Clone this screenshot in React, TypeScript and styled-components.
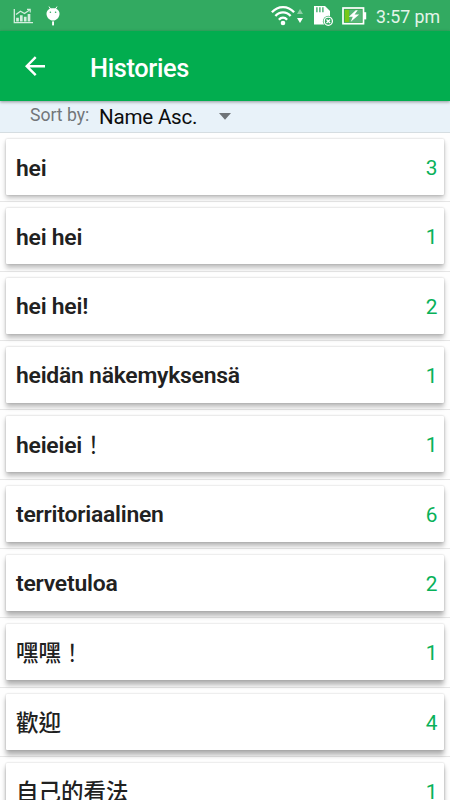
import React from "react";
import styled, { createGlobalStyle } from "styled-components";

const Global = createGlobalStyle`
  * { box-sizing: border-box; }
  html, body { margin: 0; height: 100%; overflow: hidden; background: #fff; }
  body { font-family: Roboto, "Noto Sans CJK TC", sans-serif; }
`;

const Screen = styled.div`
  width: 450px;
  height: 800px;
  overflow: hidden;
  display: flex;
  flex-direction: column;
  background: #fefefe;
`;

const StatusBar = styled.header`
  flex: none;
  height: 31px;
  background: #32aa61;
  display: flex;
  align-items: center;
  justify-content: space-between;
  padding: 0 9px 0 13px;
`;

const StatusGroup = styled.div`
  display: flex;
  align-items: center;
  height: 31px;
  svg { display: block; flex: none; }
`;

const Clock = styled.span`
  margin-left: 9px;
  width: 65px;
  white-space: nowrap;
  font-size: 17.8px;
  letter-spacing: -0.05px;
  line-height: 31px;
  padding-top: 2px;
  color: #e3f4e9;
`;

const AppBar = styled.div`
  flex: none;
  height: 70px;
  background: #02ad4f;
  display: flex;
  align-items: center;
  padding-left: 24px;
  box-shadow: 0 1px 3px rgba(0, 0, 0, 0.38);
  z-index: 1;
`;

const BackButton = styled.button`
  border: 0;
  padding: 0;
  background: none;
  width: 22px;
  height: 22px;
  svg { display: block; }
`;

const Title = styled.h1`
  margin: 4px 0 0 44px;
  font-size: 25.4px;
  letter-spacing: -0.35px;
  line-height: 32px;
  font-weight: 500;
  color: #fff;
`;

const SortBar = styled.div`
  flex: none;
  height: 32px;
  background: #e8f2f9;
  border-bottom: 1px solid #d5dde1;
  display: flex;
  align-items: flex-start;
  padding-left: 30px;
`;

const SortLabel = styled.span`
  width: 69px;
  font-size: 17.6px;
  line-height: 20px;
  padding-top: 4px;
  color: #727679;
`;

const SortSelect = styled.div`
  display: flex;
  align-items: center;
  width: 132px;
  height: 31px;
  justify-content: space-between;
  font-size: 20.6px;
  letter-spacing: -0.22px;
  line-height: 31px;
  padding-top: 2px;
  color: #0c0d0e;
  svg { display: block; margin-top: -3px; }
`;

const List = styled.ul`
  list-style: none;
  margin: 0;
  padding: 0;
`;

const Row = styled.li`
  height: 69.33px;
  padding: 6px 6px 0;
  border-bottom: 1px solid #e6e6e6;
`;

const Card = styled.div<{ $depth: number }>`
  height: 56px;
  background: #fff;
  border-radius: 1px;
  display: flex;
  align-items: center;
  justify-content: space-between;
  padding: 2px 6.5px 0 10px;
  box-shadow: 0 0 2px rgba(0, 0, 0, 0.22),
    0 ${(p) => 3 + p.$depth * 0.2}px 5px rgba(0, 0, 0, ${(p) => 0.24 + p.$depth * 0.008});
`;

const Phrase = styled.span<{ $cjk?: boolean }>`
  font-size: ${(p) => (p.$cjk ? 22.5 : 22.9)}px;
  font-weight: ${(p) => (p.$cjk ? 500 : 600)};
  letter-spacing: ${(p) => (p.$cjk ? 0 : -0.23)}px;
  line-height: 30px;
  padding-top: ${(p) => (p.$cjk ? 0 : 1)}px;
  color: #212121;
  white-space: nowrap;
`;

const WideMark = styled.span`
  font-family: "Noto Sans CJK JP", sans-serif;
  font-weight: 400;
  line-height: 0;
`;

const Count = styled.span`
  font-size: 20.8px;
  line-height: 30px;
  color: #08b159;
`;

type History = { text: string; mark?: string; count: number; cjk?: boolean };

const histories: History[] = [
  { text: "hei", count: 3 },
  { text: "hei hei", count: 1 },
  { text: "hei hei!", count: 2 },
  { text: "heidän näkemyksensä", count: 1 },
  { text: "heieiei", mark: "！", count: 1 },
  { text: "territoriaalinen", count: 6 },
  { text: "tervetuloa", count: 2 },
  { text: "嘿嘿", mark: "！", count: 1, cjk: true },
  { text: "歡迎", count: 4, cjk: true },
  { text: "自己的看法", count: 1, cjk: true },
];

const ChartIcon = () => (
  <svg width="20" height="16" viewBox="0 0 20 16" fill="none" stroke="#d5eedf">
    <path d="M1.3 1v13.7H20" strokeWidth="1.3" />
    <path d="M3 6.5 7.5 3.2l4 2.3L16.6 2" strokeWidth="1.3" />
    <path d="M14 1.4h3.2v3" strokeWidth="1.1" />
    <path d="M4.5 13.5v-3.7M8.3 13.5V7.2M12.2 13.5V8.8M16 13.5V6" strokeWidth="2.7" />
  </svg>
);

const DebugIcon = () => (
  <svg width="14" height="20" viewBox="0 0 14 20">
    <path d="m3 .6 2 3M11 .6l-2 3" stroke="#fff" strokeWidth="1" />
    <path d="M.5 7.8C.5 4.3 3.2 2.3 7 2.3s6.5 2 6.5 5.5S10.6 14.6 7 14.6.5 11.3.5 7.8z" fill="#fff" />
    <rect x="6.1" y="15.4" width="1.9" height="4" fill="#fff" />
    <circle cx="4.4" cy="6.2" r=".8" fill="#32aa61" />
    <circle cx="9.6" cy="6.2" r=".8" fill="#32aa61" />
  </svg>
);

const WifiIcon = () => (
  <svg width="24" height="21" viewBox="0 0 24 21" fill="none" stroke="#fff" strokeWidth="2.3">
    <path d="M.9 7.3C7 .4 17 .4 23.1 7.3M4.4 11C8.7 6.1 15.3 6.1 19.6 11M7.9 14.7c2.3-2.7 5.9-2.7 8.2 0" />
    <circle cx="12" cy="18" r="2.3" fill="#fff" stroke="none" />
  </svg>
);

const TrafficIcon = () => (
  <svg width="6" height="16" viewBox="0 0 6 16">
    <path d="M0 6 3 1l3 5z" fill="#8ccfa5" />
    <path d="M0 10h6l-3 5z" fill="#fff" />
  </svg>
);

const SdCardIcon = () => (
  <svg width="21" height="22" viewBox="0 0 21 22">
    <path d="M1 1h11l5 5v13.5H1z" fill="#fff" />
    <path d="M3.9 2.3v5M6.9 2.3v5M9.9 2.3v5" stroke="#32aa61" strokeWidth="1.3" />
    <circle cx="15.3" cy="16.2" r="5.4" fill="#32aa61" />
    <circle cx="15.3" cy="16.2" r="4.1" fill="#32aa61" stroke="#fff" strokeWidth="1.3" />
    <path d="m13.5 14.4 3.6 3.6m0-3.6-3.6 3.6" stroke="#fff" strokeWidth="1.4" />
  </svg>
);

const BatteryIcon = () => (
  <svg width="25" height="18" viewBox="0 0 25 18">
    <rect x="1" y="1" width="20.5" height="15.7" fill="#35a852" stroke="#fff" strokeWidth="1.7" />
    <rect x="2.8" y="2.8" width="4.6" height="12.2" fill="#78c818" />
    <rect x="7.4" y="2.8" width="12.4" height="12.2" fill="#58b67b" />
    <rect x="22" y="5.2" width="2.2" height="7.2" fill="#fff" />
    <path d="m13.8 3.2-7 6.6h4l-2 4.9 8.4-7.2h-4.6l3.2-4.3z" fill="#fff" />
  </svg>
);

const BackIcon = () => (
  <svg width="22" height="22" viewBox="0 0 22 22" fill="none" stroke="#fff" strokeWidth="2.4">
    <path d="M21 11.2H3M11.7 2.2l-9 9 9 9" />
  </svg>
);

const CaretIcon = () => (
  <svg width="12" height="7" viewBox="0 0 12 7">
    <path d="M0 0h12L6 6.7z" fill="#6f7478" />
  </svg>
);

const Spacer = styled.span<{ $w: number }>`
  width: ${(p) => p.$w}px;
`;

export default function App() {
  return (
    <>
      <Global />
      <Screen>
        <StatusBar>
          <StatusGroup>
            <ChartIcon />
            <Spacer $w={13} />
            <DebugIcon />
          </StatusGroup>
          <StatusGroup>
            <WifiIcon />
            <Spacer $w={2} />
            <TrafficIcon />
            <Spacer $w={10} />
            <SdCardIcon />
            <Spacer $w={8} />
            <BatteryIcon />
            <Clock>3:57 pm</Clock>
          </StatusGroup>
        </StatusBar>
        <AppBar>
          <BackButton aria-label="Back">
            <BackIcon />
          </BackButton>
          <Title>Histories</Title>
        </AppBar>
        <SortBar>
          <SortLabel>Sort by:</SortLabel>
          <SortSelect>
            Name Asc.
            <CaretIcon />
          </SortSelect>
        </SortBar>
        <List>
          {histories.map((h, i) => (
            <Row key={h.text}>
              <Card $depth={i}>
                <Phrase $cjk={h.cjk}>
                  {h.text}
                  {h.mark && <WideMark>{h.mark}</WideMark>}
                </Phrase>
                <Count>{h.count}</Count>
              </Card>
            </Row>
          ))}
        </List>
      </Screen>
    </>
  );
}
